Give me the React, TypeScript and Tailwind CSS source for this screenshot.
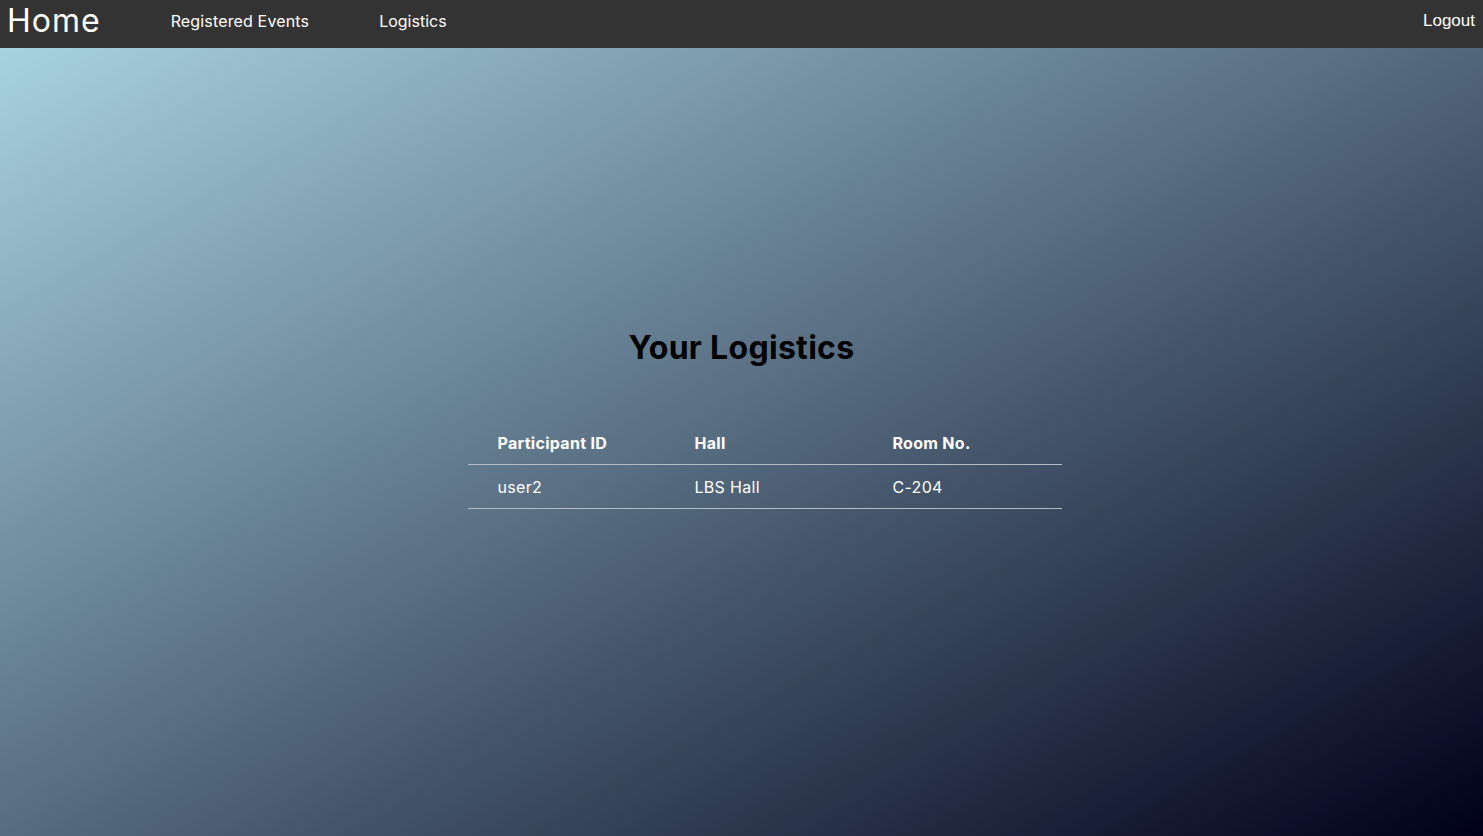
export default function App() {
  return (
    <div
      className="min-h-screen flex flex-col bg-[linear-gradient(to_bottom_right,#add8e6,#00001a)]"
      style={{ fontFamily: "Inter, 'Noto Sans', sans-serif" }}
    >
      {/* Navbar */}
      <nav className="h-12 bg-[#333333] text-white flex items-center pb-[6px]">
        <a className="pl-[7px] text-[32px] leading-none tracking-[1px]">Home</a>
        <a className="ml-[70px] text-[16px] tracking-[0.15px]">Registered Events</a>
        <a className="ml-[70px] text-[16px]">Logistics</a>
        <a
          className="ml-auto pr-2 text-[17px]"
          style={{ fontFamily: "'Liberation Sans', Arial, sans-serif" }}
        >
          Logout
        </a>
      </nav>

      {/* Content */}
      <main className="flex-1 flex flex-col items-center pt-[282px]">
        <h1 className="text-[32px] font-bold text-black leading-9 tracking-[0.3px]">Your Logistics</h1>

        <div className="w-full flex justify-center pl-[46px] mt-[54px]">
          <table className="w-[594px] text-white text-[16px] border-collapse">
            <thead>
              <tr className="h-11 border-b border-[#b5bcc4]">
                <th className="w-[197px] text-left font-bold pl-[30px] pt-[2px] tracking-[0.3px]">Participant ID</th>
                <th className="w-[198px] text-left font-bold pl-[30px] pt-[2px] tracking-[0.3px]">Hall</th>
                <th className="w-[199px] text-left font-bold pl-[30px] pt-[2px] tracking-[0.3px]">Room No.</th>
              </tr>
            </thead>
            <tbody>
              <tr className="h-11 border-b border-[#b5bcc4]">
                <td className="pl-[30px] pt-[2px] tracking-[0.3px]">user2</td>
                <td className="pl-[30px] pt-[2px] tracking-[0.3px]">LBS Hall</td>
                <td className="pl-[30px] pt-[2px] tracking-[0.3px]">C-204</td>
              </tr>
            </tbody>
          </table>
        </div>
      </main>
    </div>
  );
}
